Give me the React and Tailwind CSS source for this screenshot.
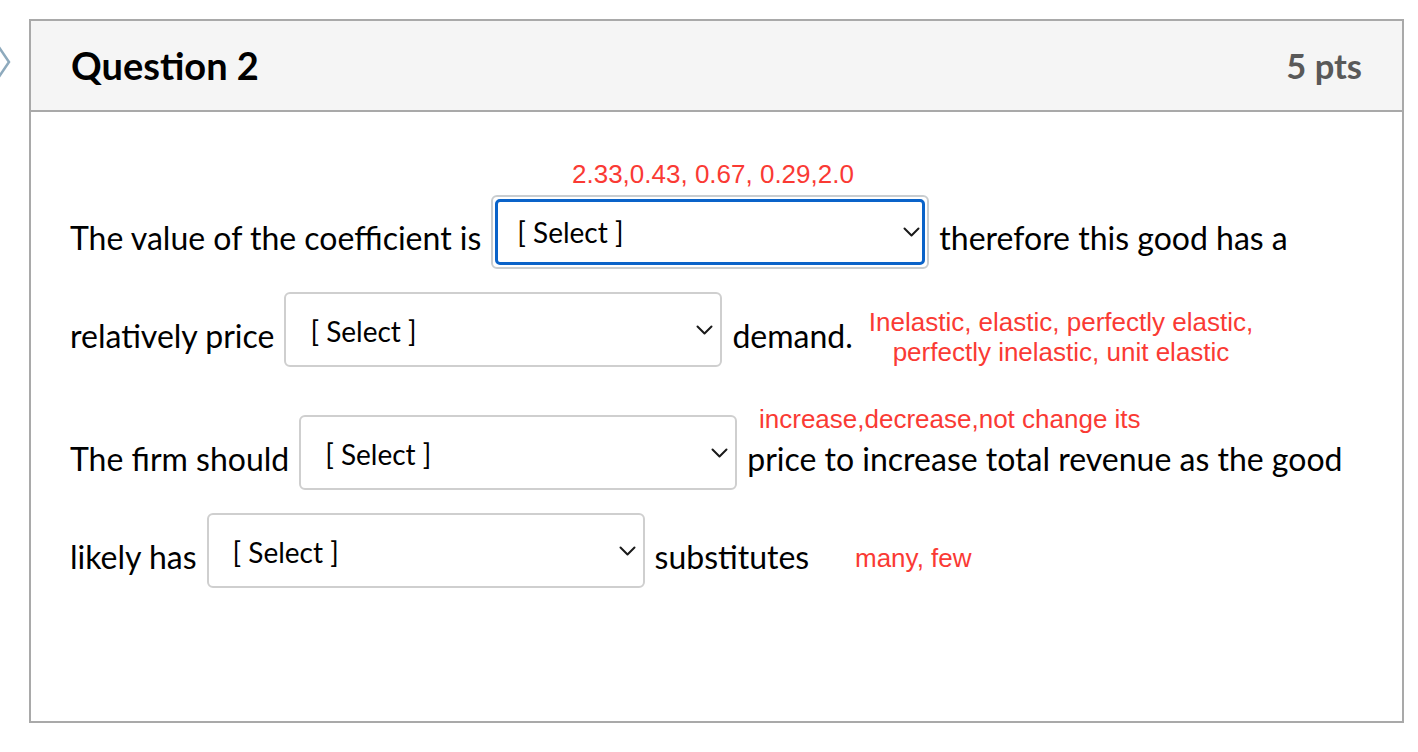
import React from "react";

function Chevron() {
  return (
    <svg width="17" height="10" viewBox="0 0 17 10" className="absolute right-[7px] top-1/2 -translate-y-1/2">
      <polyline points="1.5,1.5 8.5,8.5 15.5,1.5" fill="none" stroke="#1a1a1a" strokeWidth="2" strokeLinecap="round" strokeLinejoin="round" />
    </svg>
  );
}

function Select({ focused = false }) {
  if (focused) {
    return (
      <div className="relative w-[438px] h-[74px] shrink-0 rounded-md border-2 border-[#c9cdd0] bg-white p-[2px]">
        <div className="h-full w-full rounded-[5px] border-[3px] border-[#0a63c9] flex items-center pl-[19px]">
          <span className="text-[28px] text-black leading-none">[ Select ]</span>
        </div>
        <Chevron />
      </div>
    );
  }
  return (
    <div className="relative w-[438px] h-[75px] shrink-0 rounded-md border-2 border-[#cfcfcf] bg-white flex items-center pl-[24px]">
      <span className="text-[28px] text-black leading-none mt-[2px]">[ Select ]</span>
      <Chevron />
    </div>
  );
}

export default function App() {
  return (
    <div
      className="relative w-[1418px] h-[752px] bg-white overflow-hidden"
      style={{ fontFamily: "Lato, 'Noto Sans', sans-serif" }}
    >
      {/* left nav arrow */}
      <svg width="14" height="44" viewBox="0 0 14 44" className="absolute left-0 top-[40px]">
        <polyline points="-8,-3 9,22 -8,47" fill="none" stroke="#8eaabd" strokeWidth="2.5" />
      </svg>

      <div className="pl-[29px] pt-[19px]">
        <div className="w-[1375px] h-[704px] border-2 border-[#a9a9a9] flex flex-col">
          <div className="h-[91px] shrink-0 bg-[#f5f5f5] border-b-2 border-[#a9a9a9] flex items-center justify-between pl-[40px] pr-[40px]">
            <span className="text-[38px] font-bold text-black">Question 2</span>
            <span className="text-[34.5px] font-bold text-[#595959]">5 pts</span>
          </div>
          <div className="pl-[39px] pt-[83px] text-[32px] text-black flex flex-col">
            <div className="flex items-center gap-[10px] h-[74px]">
              <span className="mt-[12px]">The value of the coefficient is</span>
              <Select focused />
              <span className="mt-[12px]">therefore this good has a</span>
            </div>
            <div className="flex items-center gap-[10px] h-[75px] mt-[23px]">
              <span className="mt-[12px]">relatively price</span>
              <Select />
              <span className="mt-[12px]">demand.</span>
            </div>
            <div className="flex items-center gap-[10px] h-[75px] mt-[48px]">
              <span className="mt-[12px]">The firm should</span>
              <Select />
              <span className="mt-[12px]">price to increase total revenue as the good</span>
            </div>
            <div className="flex items-center gap-[10px] h-[75px] mt-[23px]">
              <span className="mt-[12px]">likely has</span>
              <Select />
              <span className="mt-[12px]">substitutes</span>
            </div>
          </div>
        </div>
      </div>

      {/* red annotations overlaid */}
      <div
        className="absolute left-[572px] top-[159px] text-[26px] leading-[31px] text-[#fa3a34] whitespace-nowrap"
        style={{ fontFamily: "'Liberation Sans', Arial, sans-serif" }}
      >
        2.33,0.43, 0.67, 0.29,2.0
      </div>
      <div
        className="absolute left-[861px] top-[307px] w-[400px] text-center text-[26px] leading-[30px] text-[#fa3a34]"
        style={{ fontFamily: "'Liberation Sans', Arial, sans-serif" }}
      >
        <div>Inelastic, elastic, perfectly elastic,</div>
        <div>perfectly inelastic, unit elastic</div>
      </div>
      <div
        className="absolute left-[759px] top-[404px] text-[26px] leading-[30px] text-[#fa3a34] whitespace-nowrap"
        style={{ fontFamily: "'Liberation Sans', Arial, sans-serif" }}
      >
        increase,decrease,not change its
      </div>
      <div
        className="absolute left-[855px] top-[543px] text-[26px] leading-[30px] text-[#fa3a34] whitespace-nowrap"
        style={{ fontFamily: "'Liberation Sans', Arial, sans-serif" }}
      >
        many, few
      </div>
    </div>
  );
}
